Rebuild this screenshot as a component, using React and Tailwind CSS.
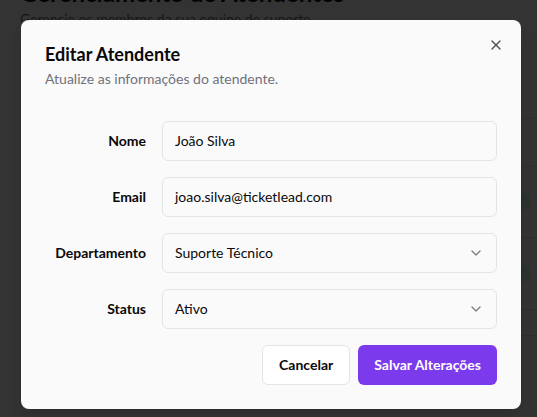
import React from "react";

const XIcon = () => (
  <svg width="16" height="16" viewBox="0 0 24 24" fill="none" stroke="currentColor" strokeWidth="2" strokeLinecap="round" strokeLinejoin="round">
    <path d="M18 6 6 18" />
    <path d="m6 6 12 12" />
  </svg>
);

const Chevron = () => (
  <svg width="16" height="16" viewBox="0 0 24 24" fill="none" stroke="currentColor" strokeWidth="2" strokeLinecap="round" strokeLinejoin="round">
    <path d="m6 9 6 6 6-6" />
  </svg>
);

function Row({ label, children }) {
  return (
    <div className="grid grid-cols-4 items-center gap-4">
      <label className="text-right text-sm font-bold text-[#09090b]">{label}</label>
      <div className="col-span-3">{children}</div>
    </div>
  );
}

function Input({ value }) {
  return (
    <div className="flex h-10 w-full items-center rounded-md border border-[#e4e4e7] px-3 text-sm text-[#09090b]">
      {value}
    </div>
  );
}

function Select({ value }) {
  return (
    <div className="flex h-10 w-full items-center justify-between rounded-md border border-[#e4e4e7] px-3 text-sm text-[#09090b]">
      <span>{value}</span>
      <span className="text-[#09090b] opacity-50">
        <Chevron />
      </span>
    </div>
  );
}

export default function App() {
  return (
    <div className="relative h-[417px] w-[537px] overflow-hidden bg-white font-['Lato',sans-serif]">
      {/* background page */}
      <div className="px-5">
        <h1 className="mt-[-23px] text-2xl font-bold text-[#0a0a0a]">Gerenciamento de Atendentes</h1>
        <p className="text-sm text-[#71717a]">Gerencie os membros da sua equipe de suporte</p>
        <div className="mt-[89px] w-[700px] border-y border-[#e5e5e5]">
          <div className="h-[48px] border-b border-[#e5e5e5]" />
          <div className="flex h-[71px] items-center border-b border-[#e5e5e5] pl-[491px]">
            <div className="h-5 w-5 rounded-full bg-[#dcfce7]" />
          </div>
          <div className="flex h-[72px] items-center border-b border-[#e5e5e5] pl-[491px]">
            <div className="h-5 w-5 rounded-full bg-[#dcfce7]" />
          </div>
          <div className="h-[25px]" />
        </div>
      </div>

      {/* overlay */}
      <div className="absolute inset-0 bg-black/80" />

      {/* dialog */}
      <div className="absolute left-[21px] top-[20px] w-[500px] rounded-lg bg-[#fafafa] p-6 shadow-lg">
        <button className="absolute right-[17px] top-[17px] text-[#09090b] opacity-70">
          <XIcon />
        </button>
        <div className="flex flex-col gap-1.5 pt-px">
          <h2 className="text-lg font-bold leading-none text-[#09090b]">Editar Atendente</h2>
          <p className="text-sm text-[#71717a]">Atualize as informações do atendente.</p>
        </div>
        <div className="grid gap-4 py-4 mt-4">
          <Row label="Nome"><Input value="João Silva" /></Row>
          <Row label="Email"><Input value="joao.silva@ticketlead.com" /></Row>
          <Row label="Departamento"><Select value="Suporte Técnico" /></Row>
          <Row label="Status"><Select value="Ativo" /></Row>
        </div>
        <div className="flex justify-end gap-2">
          <button className="h-10 rounded-md border border-[#e4e4e7] bg-white px-4 text-sm font-bold text-[#09090b]">Cancelar</button>
          <button className="h-10 rounded-md bg-[#7c3aed] px-4 text-sm font-bold text-white">Salvar Alterações</button>
        </div>
      </div>
    </div>
  );
}
